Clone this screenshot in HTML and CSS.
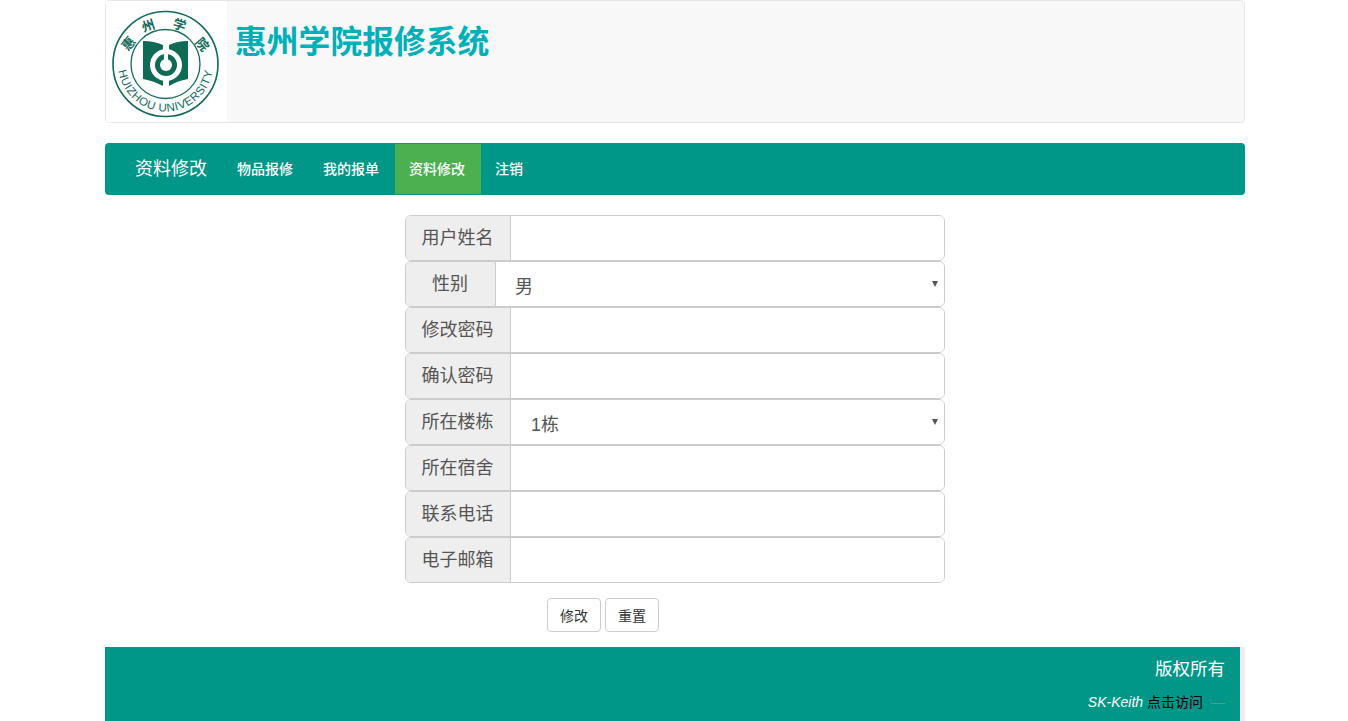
FILE: index.html
```html
<!DOCTYPE html>
<html lang="zh">
<head>
<meta charset="utf-8">
<title>惠州学院报修系统</title>
<link rel="stylesheet" href="styles.css">
</head>
<body>
<div class="container">
  <header class="masthead">
    <div class="logo">
      <svg class="seal" viewBox="0 0 120 120" width="120" height="120">
        <defs>
          <path id="arc" d="M12 63 A47.5 47.5 0 0 0 107 63"/>
        </defs>
        <circle cx="59.5" cy="63" r="52.5" fill="none" stroke="#12695a" stroke-width="1.6"/>
        <circle cx="59.5" cy="63" r="34.5" fill="none" stroke="#12695a" stroke-width="1.3"/>
        <text class="seal-en"><textPath href="#arc" startOffset="50%" text-anchor="middle">HUIZHOU UNIVERSITY</textPath></text>
        <text class="seal-cn" transform="translate(22 42) rotate(-50)" text-anchor="middle" dominant-baseline="central">惠</text>
        <text class="seal-cn" transform="translate(42 24) rotate(-18)" text-anchor="middle" dominant-baseline="central">州</text>
        <text class="seal-cn" transform="translate(74 23) rotate(18)" text-anchor="middle" dominant-baseline="central">学</text>
        <text class="seal-cn" transform="translate(97 43) rotate(50)" text-anchor="middle" dominant-baseline="central">院</text>
        <path fill="#0f6b55" d="M37 40 Q48 40 57 44 V85 Q48 80 37 78 Z"/>
        <path fill="#0f6b55" d="M82 40 Q71 40 63 44 V85 Q71 80 82 78 Z"/>
        <circle cx="60" cy="64" r="16" fill="#fff"/>
        <circle cx="60" cy="64" r="11" fill="#0f6b55"/>
        <circle cx="60" cy="64" r="6" fill="#fff"/>
        <rect x="58" y="52" width="4" height="9" fill="#fff"/>
      </svg>
    </div>
    <h1 class="site-title">惠州学院报修系统</h1>
  </header>

  <nav class="navbar">
    <span class="brand">资料修改</span>
    <a class="nav-link">物品报修</a>
    <a class="nav-link">我的报单</a>
    <a class="nav-link active">资料修改</a>
    <a class="nav-link">注销</a>
  </nav>

  <form class="profile-form">
    <div class="field"><label class="addon">用户姓名</label><input class="control" type="text"></div>
    <div class="field"><label class="addon addon-narrow">性别</label><div class="select-wrap"><select class="control select select-narrow"><option>男</option><option>女</option></select></div></div>
    <div class="field"><label class="addon">修改密码</label><input class="control" type="password"></div>
    <div class="field"><label class="addon">确认密码</label><input class="control" type="password"></div>
    <div class="field"><label class="addon">所在楼栋</label><div class="select-wrap"><select class="control select"><option>1栋</option><option>2栋</option></select></div></div>
    <div class="field"><label class="addon">所在宿舍</label><input class="control" type="text"></div>
    <div class="field"><label class="addon">联系电话</label><input class="control" type="text"></div>
    <div class="field"><label class="addon">电子邮箱</label><input class="control" type="text"></div>
    <div class="actions">
      <button class="btn" type="button">修改</button>
      <button class="btn" type="reset">重置</button>
    </div>
  </form>

  <footer class="footer-shell">
    <div class="footer">
      <p class="copyright">版权所有</p>
      <p class="credit"><em class="author">SK-Keith</em> <a class="visit">点击访问</a><span class="dash">—</span></p>
    </div>
  </footer>
</div>
</body>
</html>
```
FILE: styles.css
```css
* { box-sizing: border-box; }
html, body { margin: 0; padding: 0; background: #fff; }
body {
  font-family: "Helvetica Neue", "Liberation Sans", "Noto Sans CJK SC", sans-serif;
  font-size: 14px;
  color: #333;
}
.container { width: 1140px; margin-left: 105px; }

.masthead {
  display: flex;
  height: 123px;
  background: #f8f8f8;
  border: 1px solid #e7e7e7;
  border-radius: 4px;
  margin-bottom: 20px;
}
.logo { width: 121px; background: #fff; border-radius: 3px 0 0 3px; }
.seal { display: block; }
.seal-en { font: 11.5px "Liberation Sans", sans-serif; fill: #12695a; letter-spacing: .6px; }
.seal-cn { font: 700 13px "Noto Sans CJK SC", sans-serif; fill: #12695a; }
.site-title {
  margin: 19px 0 0 8px;
  font-size: 31.8px;
  line-height: 44px;
  font-weight: 700;
  color: #00b0b9;
  font-family: "Liberation Sans", "Noto Sans CJK SC", sans-serif;
}

.navbar {
  display: flex;
  align-items: stretch;
  height: 52px;
  padding: 1px 0 1px 15px;
  background: #009688;
  border-radius: 4px;
  margin-bottom: 20px;
}
.brand { padding: 0 15px; font-size: 18px; line-height: 51px; color: #fff; }
.nav-link { padding: 0 16px 0 14px; font-size: 14px; line-height: 50px; color: #fff; font-weight: 500; }
.nav-link.active { background: #4caf50; }
.brand + .nav-link { margin-left: 1px; }

.profile-form { width: 540px; margin: 0 auto; }
.field {
  display: flex;
  height: 46px;
  border: 1px solid #ccc;
  border-radius: 6px;
  overflow: hidden;
  background: #fff;
}
.addon {
  flex: 0 0 105px;
  padding-right: 1px;
  background: #eee;
  border-right: 1px solid #ccc;
  text-align: center;
  font-size: 18px;
  line-height: 44px;
  color: #555;
}
.addon-narrow { flex-basis: 90px; }
.control {
  flex: 1;
  min-width: 0;
  width: 100%;
  height: 100%;
  border: 0;
  outline: 0;
  background: #fff;
  font: 18px "Liberation Sans", "Noto Sans CJK SC", sans-serif;
  color: #555;
}
.select-wrap { flex: 1; position: relative; }
.select-wrap::after {
  content: "";
  position: absolute;
  right: 6px;
  top: 19px;
  border: 3.5px solid transparent;
  border-top: 6px solid #555;
  border-bottom: 0;
}
.select { appearance: none; -webkit-appearance: none; padding: 5px 0 0 20px; }
.select-narrow { padding-left: 19px; }

.actions { display: flex; justify-content: flex-start; gap: 4px; padding: 15px 0 15px 142px; }
.btn {
  width: 54px;
  height: 34px;
  padding: 0;
  background: #fff;
  border: 1px solid #ccc;
  border-radius: 4px;
  font: 14px "Liberation Sans", "Noto Sans CJK SC", sans-serif;
  color: #333;
}

.footer-shell { background: #eee; height: 74px; overflow: hidden; }
.footer {
  width: 1135px;
  height: 100%;
  background: #009688;
  padding: 8px 15px 0;
  text-align: right;
  color: #fff;
}
.copyright { margin: 0; font-size: 17.5px; line-height: 28px; }
.credit { margin: 9px 0 0; line-height: 20px; font-size: 14px; }
.author { color: #fff; }
.visit { color: #000; }
.dash { margin-left: 8px; color: #4a9f94; }
```
